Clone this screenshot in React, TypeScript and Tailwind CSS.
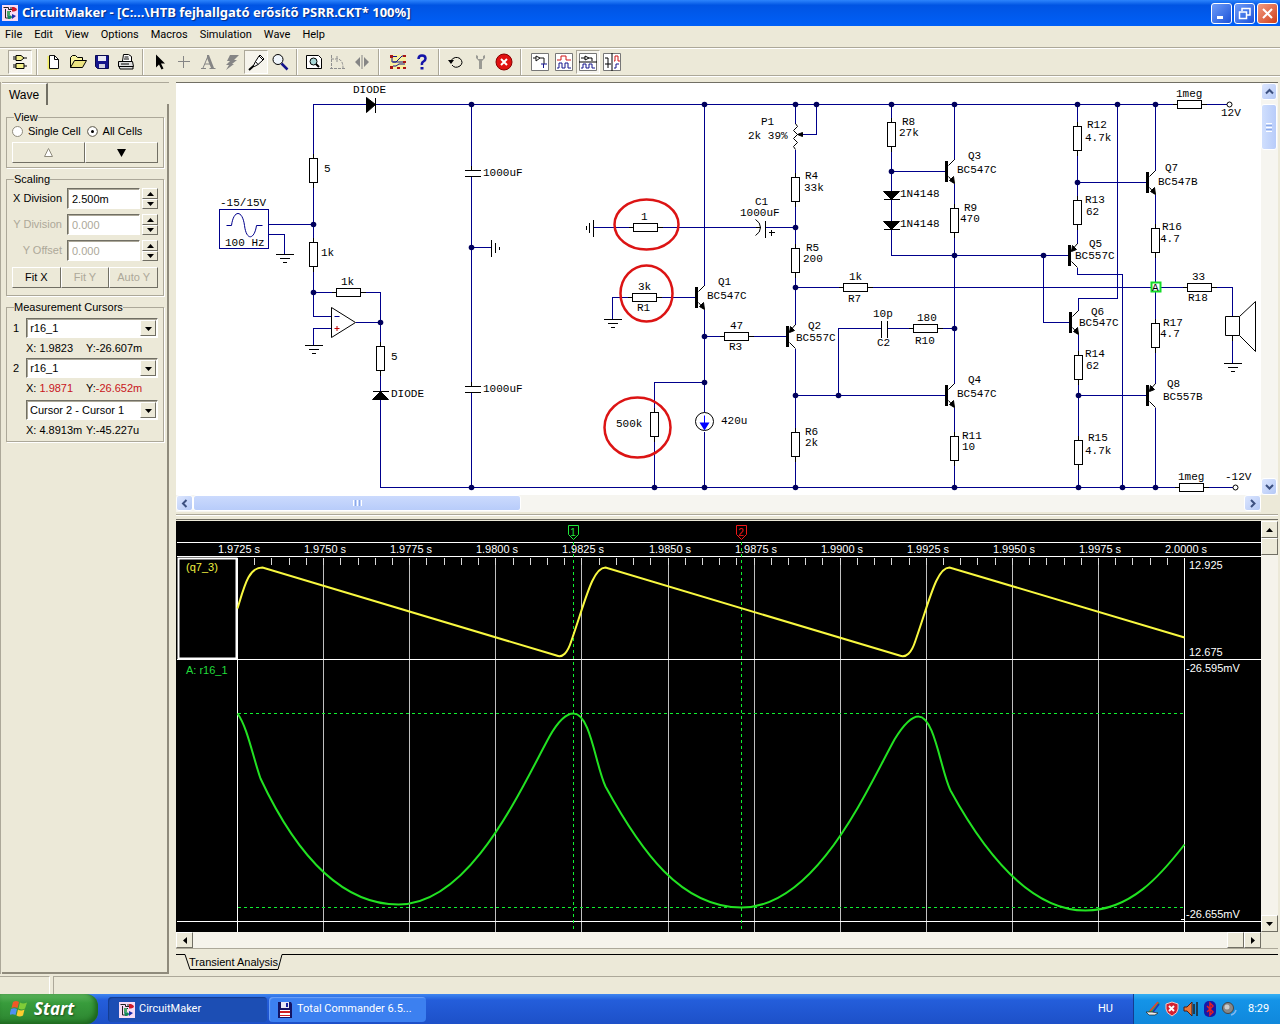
import React from 'react';

const NAVY = '#00008c';

/* ---------- schematic ---------- */

const wires = [
  'M313 158V104H366M375 104H1177M1201 104H1226',
  'M313 182V242M313 266V316H331M313 292H336M360 292H380V346M355 322H380M380 370V391M380 399V487H1179M1203 487H1232',
  'M268 224H313M268 234H284V254M331 328H313V345',
  'M471 104V170M471 176V386M471 392V487M471 247H491',
  'M593 227H633M657 227H755M765 227H795',
  'M704 104V285M704 309V412M704 431V487M656 297H695M632 297H612V319',
  'M704 336H724M748 336H787M704 382H654V412M654 436V487',
  'M795 104V123M795 149V177M795 201V248M795 272V324M795 348V432M795 456V487M816 104V134H802',
  'M795 287H843M867 287H1187M1211 287H1232V316M1232 335V363',
  'M795 395H946M838 395V328H881M887 328H913M937 328H954',
  'M891 104V122M891 146V191M891 199V221M891 229V255H1069M891 171H946',
  'M954 104V159M954 183V208M954 232V383M954 407V436M954 460V487M1043 255V322H1070',
  'M1077 104V126M1077 150V200M1077 224V243M1077 267V274H1122V487M1117 104V298H1078V310',
  'M1078 334V355M1078 379V440M1078 464V487M1078 395H1147M1077 182H1147',
  'M1155 104V170M1155 194V228M1155 252V323M1155 347V383M1155 407V487',
];

const verticalResistors = [
  [313, 158], [313, 242], [380, 346], [795, 177], [795, 248], [891, 122], [954, 208], [1077, 126],
  [1077, 200], [1155, 228], [1155, 323], [1078, 355], [1078, 440], [954, 436], [795, 432], [654, 412],
];

const horizontalResistors = [
  [336, 292], [633, 227], [632, 297], [724, 336], [843, 287], [913, 328], [1177, 104], [1179, 487], [1187, 287],
];

const dots = [
  [471, 104], [704, 104], [795, 104], [816, 104], [891, 104], [954, 104], [1077, 104], [1117, 104], [1155, 104],
  [313, 224], [471, 247], [313, 292], [380, 322], [704, 336], [704, 382], [795, 227], [795, 287], [891, 171],
  [954, 255], [1043, 255], [954, 328], [795, 395], [838, 395], [1077, 182], [1078, 395],
  [471, 487], [654, 487], [704, 487], [795, 487], [954, 487], [1078, 487], [1122, 487], [1155, 487],
];

const labels: [number, number, string][] = [
  [353, 93, 'DIODE'], [324, 172, '5'], [220, 206, '-15/15V'], [225, 246, '100 Hz'], [321, 256, '1k'],
  [341, 285, '1k'], [391, 360, '5'], [391, 397, 'DIODE'], [483, 176, '1000uF'], [483, 392, '1000uF'],
  [761, 125, 'P1'], [748, 139, '2k 39%'], [805, 179, 'R4'], [804, 191, '33k'], [755, 205, 'C1'],
  [740, 216, '1000uF'], [641, 220, '1'], [806, 251, 'R5'], [803, 262, '200'], [718, 285, 'Q1'],
  [707, 299, 'BC547C'], [638, 290, '3k'], [637, 311, 'R1'], [730, 329, '47'], [729, 350, 'R3'],
  [808, 329, 'Q2'], [796, 341, 'BC557C'], [849, 280, '1k'], [848, 302, 'R7'], [873, 317, '10p'],
  [877, 346, 'C2'], [917, 321, '180'], [915, 344, 'R10'], [616, 427, '500k'], [721, 424, '420u'],
  [805, 435, 'R6'], [805, 446, '2k'], [902, 125, 'R8'], [899, 136, '27k'], [900, 197, '1N4148'],
  [900, 227, '1N4148'], [968, 159, 'Q3'], [957, 173, 'BC547C'], [964, 211, 'R9'], [960, 222, '470'],
  [1087, 128, 'R12'], [1085, 141, '4.7k'], [1085, 203, 'R13'], [1086, 215, '62'], [1165, 171, 'Q7'],
  [1158, 185, 'BC547B'], [1162, 230, 'R16'], [1160, 242, '4.7'], [1089, 247, 'Q5'], [1075, 259, 'BC557C'],
  [1192, 280, '33'], [1188, 301, 'R18'], [1176, 97, '1meg'], [1221, 116, '12V'], [1091, 315, 'Q6'],
  [1079, 326, 'BC547C'], [1085, 357, 'R14'], [1086, 369, '62'], [1163, 326, 'R17'], [1160, 337, '4.7'],
  [968, 383, 'Q4'], [957, 397, 'BC547C'], [962, 439, 'R11'], [962, 450, '10'], [1167, 387, 'Q8'],
  [1163, 400, 'BC557B'], [1088, 441, 'R15'], [1085, 454, '4.7k'], [1178, 480, '1meg'], [1225, 480, '-12V'],
];

function Npn({ x, y }: { x: number; y: number }) {
  return (
    <g>
      <rect x={x - 9} y={y - 10} width="2" height="20" fill="#000" />
      <path d={`M${x - 6} ${y - 6}L${x} ${y - 12}M${x - 6} ${y + 5}L${x} ${y + 12}`} />
      <path d={`M${x} ${y + 12}l-1-7l-4 4z`} fill="#000" />
    </g>
  );
}

function Pnp({ x, y }: { x: number; y: number }) {
  return (
    <g>
      <rect x={x - 9} y={y - 10} width="2" height="20" fill="#000" />
      <path d={`M${x - 6} ${y - 5}L${x} ${y - 12}M${x - 6} ${y + 6}L${x} ${y + 12}`} />
      <path d={`M${x - 6} ${y - 4}l1-6l4 4z`} fill="#000" />
    </g>
  );
}

function Schematic() {
  return (
    <svg className="block h-[412px] w-[1085px] shrink-0" viewBox="176 83 1085 412" role="img" aria-label="Headphone amplifier schematic">
      <g transform="translate(0.5 0.5)" fill="none" strokeWidth="1">
        <path d={wires.join('')} stroke={NAVY} shapeRendering="crispEdges" />
        <g stroke="#000" shapeRendering="crispEdges">
          {verticalResistors.map(([x, y]) => (
            <g key={`${x}-${y}`}>
              <path d={`M${x} ${y - 5}v5M${x} ${y + 24}v5`} />
              <rect x={x - 4} y={y} width="8" height="24" fill="#fff" />
            </g>
          ))}
          {horizontalResistors.map(([x, y]) => (
            <g key={`${x}-${y}`}>
              <path d={`M${x - 5} ${y}h5M${x + 24} ${y}h5`} />
              <rect x={x} y={y - 4} width="24" height="8" fill="#fff" />
            </g>
          ))}
          <path d="M464 170h16M464 176h16M464 386h16M464 392h16M471 165v5M471 381v5" />
          <path d="M491 239v17M495 242v10M499 246v3" />
          <path d="M275 254h18M279 258h10M282 262h4M304 345h18M308 349h10M311 353h4M603 319h18M607 323h10M610 327h4M1223 363h18M1227 367h10M1230 371h4" />
          <path d="M593 219v17M589 222v10M586 225v4M765 220v17M881 320v17M887 320v17M755 227h5" />
          <path d="M768 232h6M771 229v6" />
          <path d="M375 97v15M372 391h16M883 199h16M883 229h16M1232 335v5" />
        </g>
        <g stroke="#000">
          <path d="M366 97v15l9-8zM372 399h16l-8-8zM883 191h16l-8 8zM883 221h16l-8 8z" fill="#000" />
          <path d="M795 123l2 3l-4 4l4 4l-4 4l4 4l-4 4l2 3" />
          <path d="M797 134l5-2v4z" fill="#000" />
          <path d="M755 219q5 3 5 8t-5 8" />
          <path d="M331 307V337L355 322z" fill="#fff" />
          <path d="M1225 316h14v19h-14zM1239 316L1255 301V351L1239 335" />
          <circle cx="704" cy="421" r="9" fill="#fff" />
          <circle cx="1229" cy="104" r="2.500" fill="#fff" />
          <circle cx="1235" cy="487" r="2.500" fill="#fff" />
          <Npn x={704} y={297} />
          <Npn x={954} y={171} />
          <Npn x={954} y={395} />
          <Npn x={1155} y={182} />
          <Npn x={1078} y={322} />
          <Pnp x={795} y={336} />
          <Pnp x={1077} y={255} />
          <Pnp x={1155} y={395} />
        </g>
        <path d="M704 415v8" stroke="#00f" />
        <path d="M699 422h10l-5 8z" fill="#00f" />
        <path d="M334 316h5" stroke={NAVY} />
        <path d="M334 328h5M336.500 325.500v5" stroke="#c00000" />
        <rect x="219" y="209" width="49" height="39" stroke={NAVY} />
        <path d="M226 225h5c2-16 11-16 13 0s10 14 12 0h6" stroke={NAVY} />
        <g fill="#00005c">
          {dots.map(([x, y]) => (
            <circle key={`${x}-${y}`} cx={x} cy={y} r="2.800" />
          ))}
        </g>
        <rect x="1151" y="282" width="9" height="9" stroke="#14dc28" strokeWidth="2" fill="#fff" />
        <g stroke="#dc1414" strokeWidth="2.500">
          <ellipse cx="646" cy="224" rx="32" ry="25" />
          <ellipse cx="646" cy="293" rx="26" ry="28" />
          <ellipse cx="637" cy="427" rx="33" ry="30" />
        </g>
      </g>
      <g className="font-['Liberation_Mono',monospace] text-[11px]" fill="#000">
        {labels.map(([x, y, t]) => (
          <text key={`${x}-${y}`} x={x} y={y}>{t}</text>
        ))}
        <text x="1152" y="291">A</text>
      </g>
    </svg>
  );
}

/* ---------- wave plot ---------- */

const gridX = [237, 323, 409, 495, 581, 668, 754, 840, 926, 1012, 1098, 1184];
const times = ['1.9725 s', '1.9750 s', '1.9775 s', '1.9800 s', '1.9825 s', '1.9850 s', '1.9875 s', '1.9900 s', '1.9925 s', '1.9950 s', '1.9975 s', '2.0000 s'];
const minorTicks = Array.from({ length: 55 }, (_, i) => `M${Math.round(237 + i * 17.22)} 557v7`).join('');

function WavePlot() {
  return (
    <svg className="block h-[411px] w-[1085px] shrink-0" viewBox="176 521 1085 411" role="img" aria-label="Transient analysis waveforms">
      <g transform="translate(0.5 0.5)" fill="none">
        <g shapeRendering="crispEdges">
          <path d={gridX.map((x) => `M${x} 557V932`).join('')} stroke="#c0c0c0" />
          <path d={minorTicks} stroke="#d8d8d8" />
          <path d="M176 542H1261M176 556H1261M176 659H1261M176 921H1261M237 557V932M1184 557V932M1180 919h4" stroke="#fff" />
          <path d="M237 713H1184M237 907H1184" stroke="#10f030" strokeDasharray="3 3" />
          <path d="M573 541V932M741 541V932" stroke="#10f030" strokeDasharray="3 3" />
        </g>
        <rect x="178" y="558" width="58" height="100" stroke="#fff" strokeWidth="2" />
        <path d="M568 525h10v9l-5 5l-5-5z" stroke="#21e83b" />
        <path d="M736 525h10v9l-5 5l-5-5z" stroke="#f01818" />
        <path
          d="M237 608C244 585 248 567 262 567L556 655Q565 659 571 640C585 600 592 567 605 567L899 655Q909 659 915 640C929 600 936 567 949 567L1184 637"
          stroke="#f8f840" strokeWidth="2"
        />
        <path
          d="M237 713C247 727 252 755 260 778C290 842 335 904 398 904C470 904 520 789 549 736Q562 713 573 713C590 713 595 765 605 786C640 850 680 907 741 907C815 907 865 792 894 739Q908 716 918 716C934 716 940 769 950 790C985 854 1030 910 1085 910C1130 910 1160 875 1184 844"
          stroke="#22e222" strokeWidth="2"
        />
      </g>
      <g className="font-['Liberation_Sans',sans-serif] text-[11px]" fill="#fff">
        {times.map((t, i) => (
          <text key={t} x={gridX[i] + 2} y="553" textAnchor="middle">{t}</text>
        ))}
        <text x="1189" y="569">12.925</text>
        <text x="1189" y="656">12.675</text>
        <text x="1186" y="672">-26.595mV</text>
        <text x="1186" y="918">-26.655mV</text>
        <text x="186" y="571" fill="#f0f040">(q7_3)</text>
        <text x="186" y="674" fill="#22dc3c">A: r16_1</text>
        <text x="573" y="536" fill="#22e83c" fontSize="10" textAnchor="middle">1</text>
        <text x="741" y="536" fill="#f01818" fontSize="10" textAnchor="middle">2</text>
      </g>
    </svg>
  );
}

/* ---------- small pieces ---------- */

const raised = 'border border-t-white border-l-white border-r-[#716f64] border-b-[#716f64] bg-[#ece9d8]';
const sunken = 'border border-t-[#716f64] border-l-[#716f64] border-r-white border-b-white bg-white';

function Tri({ dir }: { dir: 'up' | 'down' | 'left' | 'right' }) {
  const d = { up: 'M0 5h7L3.500 1z', down: 'M0 1h7L3.500 5z', left: 'M5 0v7L1 3.500z', right: 'M1 0v7L5 3.500z' }[dir];
  return <svg className="h-[7px] w-[7px]" viewBox={dir === 'up' || dir === 'down' ? '0 -1 7 7' : '-1 0 7 7'}><path d={d} /></svg>;
}

function AppIcon() {
  return (
    <svg className="h-4 w-4 shrink-0" viewBox="0 0 16 16">
      <rect width="16" height="16" fill="#f8dcf4" />
      <path d="M1.500 2.500h5v2h4M3.500 4v9h4M6 6.500h3M9 2v3" fill="none" stroke="#222" />
      <path d="M10 2h2q3 1 3 2.500t-3 2h-2z" fill="#d01828" />
      <path d="M5 6h3v4H5z" fill="#48a868" />
      <path d="M10 9l4 2l-4 3z" fill="#1c2cac" />
      <path d="M5 10q5 0 5 2t-4 2z" fill="#128858" />
    </svg>
  );
}

function CaptionButton({ label, red, children }: { label: string; red?: boolean; children: React.ReactNode }) {
  return (
    <button aria-label={label} className={`flex h-[21px] w-[21px] items-center justify-center rounded-[3px] border border-white ${red ? 'bg-linear-to-br from-[#f09a80] to-[#d03c10]' : 'bg-linear-to-br from-[#6f9cf8] to-[#1c50d8]'}`}>
      <svg className="h-[15px] w-[15px]" viewBox="0 0 15 15" fill="none" stroke="#fff" strokeWidth="2">{children}</svg>
    </button>
  );
}

function Tool({ label, pressed, children }: { label: string; pressed?: boolean; children: React.ReactNode }) {
  return (
    <button aria-label={label} className={`flex h-6 w-6 items-center justify-center ${pressed ? 'border border-t-[#aca899] border-l-[#aca899] border-r-white border-b-white bg-[#f6f4ec]' : ''}`}>
      <svg className="h-[18px] w-[18px] shrink-0" viewBox="0 0 18 18" fill="none" stroke="#000">{children}</svg>
    </button>
  );
}

function Sep({ wide }: { wide?: boolean }) {
  return <div className={`h-[26px] w-0.5 border-l border-[#aca899] bg-white ${wide ? 'mr-1.5 ml-1' : 'mx-1'}`} />;
}

function Toolbar() {
  return (
    <div className="flex h-[29px] items-center border-t border-b border-t-[#aca899] border-b-[#aca899] pl-2 shadow-[inset_0_1px_0_#fff,0_1px_0_#fff]">
      <Tool label="Parts" pressed>
        <path d="M5 2.500h5l3 2.500l-3 2.500H5zM2 4h3M2 6h3M13 5h3M5 10.500h8v5H5zM2 12h3M2 14h3M13 13h3" fill="#f4f08c" />
      </Tool>
      <Sep />
      <Tool label="New"><path d="M4 3v12h9" stroke="#f4f060" strokeWidth="3" /><path d="M4.500 2.500h5l4 4v9h-9z" fill="#fff" stroke="#111" /><path d="M9.500 2.500v4h4" /></Tool>
      <Tool label="Open"><path d="M1.500 14.500v-10l2-2h3l2 2h5v3" fill="#f8f4a0" /><path d="M1.500 14.500l4-7h12l-4 7z" fill="#ece480" /></Tool>
      <Tool label="Save"><path d="M2.500 2.500h13v13h-11l-2-2z" fill="#14148c" stroke="#0a0a50" /><path d="M5 3h8v5H5z" fill="#e8e8f4" stroke="none" /><path d="M6 11h6v4H6z" fill="#d0d0e0" stroke="none" /></Tool>
      <Tool label="Print"><path d="M5.500 8l1-6.500h5l3 2V8M7.500 4h4M7 6h5" fill="#fff" /><path d="M1.500 8.500h14l1 5h-15zM2 13.500h14v2.500H3z" fill="#ddd" /><path d="M4 11h8" /></Tool>
      <Sep />
      <Tool label="Select"><path d="M5 1.500v13l3-3l2.500 5l2-1l-2.500-5h4z" fill="#000" stroke="none" /></Tool>
      <Tool label="Wire"><path d="M8.500 3v12M3 8.500h12" stroke="#858585" /></Tool>
      <Tool label="Text"><path d="M2 15.500h5M10.500 15.500h6M4 15L9 3M6 11h6" stroke="#858585" /><path d="M8 2h2l5 13h-3L8 5z" fill="#858585" stroke="none" /></Tool>
      <Tool label="Delete"><path d="M7 2h9l-5 5h3l-5 4h2l-8 6l3-5H3l4-4H4z" fill="#858585" stroke="none" /></Tool>
      <Tool label="Probe" pressed><path d="M8.500 8.500L12 3l4 4l-5 4.500zM8.500 8.500l-2 4l1 1l3.500-2M12 3l1-1l4 4l-1 1" fill="#fff" /><path d="M7 12.500l-5 4.500" strokeWidth="2" /></Tool>
      <Tool label="Zoom"><circle cx="7" cy="6.500" r="5" fill="#f0f6fc" /><path d="M10.500 10.500l6 6" stroke="#14148c" strokeWidth="2.500" /></Tool>
      <Sep />
      <Tool label="Fit circuit"><path d="M1.500 2.500h12l3 3v10h-15z" fill="#fff" /><circle cx="8.500" cy="8.500" r="3.500" fill="#a8d8d8" /><path d="M11 11l3 3" strokeWidth="2" /></Tool>
      <Tool label="Rotate"><path d="M2.500 2v14M1 15.500h16M2 6h7q5 1 5 9M8 3v6" stroke="#909090" strokeDasharray="3 1" /></Tool>
      <Tool label="Mirror"><path d="M2 9l5-5v10zM16 9l-5-5v10z" fill="#858585" stroke="none" /><path d="M9 2v14" stroke="#858585" /></Tool>
      <Sep wide />
      <Tool label="Trace">
        <path d="M1 2h16v14H1z" fill="#f8f0a0" stroke="none" />
        <path d="M4 3.500h4M3 5v4h4l6-6h3M4 9h11M4 13h3l3-2h6" stroke="#14148c" />
        <path d="M1 2h3v3H1zM14 2h3v2h-3zM14 8h3v2h-3zM1 13h3v3H1zM8 14h3v2H8zM14 14h3v2h-3z" fill="#a81414" stroke="none" />
      </Tool>
      <Tool label="Help"><path d="M5.500 6q0-3.500 3.500-3.500t3.500 3q0 2-2 3T9 12" stroke="#1414a8" strokeWidth="2.500" /><path d="M7.500 14h3v2.500h-3z" fill="#1414a8" stroke="none" /></Tool>
      <Sep />
      <Tool label="Reset"><path d="M4 7.500q4-5 9-2q4 4 0 7.500q-5 3-8-1" /><path d="M1 7h6l-3 4z" fill="#000" stroke="none" /></Tool>
      <Tool label="Step"><path d="M5 2v3l3 3v8h3V8l3-3V2l-2 1v3H7V3z" fill="#9a9a94" stroke="none" /></Tool>
      <Tool label="Stop"><circle cx="9" cy="9" r="8" fill="#e01010" stroke="#800" /><path d="M6 6l6 6M12 6l-6 6" stroke="#fff" strokeWidth="2" /></Tool>
      <Sep wide />
      <Tool label="Schematic view"><path d="M.5 .5h17v17H.5z" fill="#fff" stroke="#777" /><path d="M2 5h3M9 5h4v6M5 3v5l4-3z" stroke="#111" /><path d="M10 11h6M12.500 11v4" stroke="#14148c" /></Tool>
      <Tool label="Wave view"><path d="M.5 .5h17v17H.5z" fill="#fff" stroke="#777" /><path d="M2 7h4V3h5v4h5" stroke="#d01414" /><path d="M2 15h2v-5h3v5h3v-5h3v5h3" stroke="#14148c" /></Tool>
      <Tool label="Split horizontally" pressed><path d="M.5 .5h17v17H.5z" fill="#fff" stroke="#777" /><path d="M0 9h18M2 5h4M10 5h3v3M6 3v4l4-2z" /><path d="M2 15h2v-4h3v4h3v-4h3v4h3" stroke="#14148c" /></Tool>
      <Tool label="Split vertically"><path d="M.5 .5h17v17H.5z" fill="#fff" stroke="#777" /><path d="M9 0v18M2 5h3v6M2 11h6M5 11v4" /><path d="M11 8h1V3h3v5h2" stroke="#d01414" /><path d="M11 15h2v-4h3" stroke="#14148c" /></Tool>
    </div>
  );
}

function Group({ title, className, children }: { title: string; className: string; children: React.ReactNode }) {
  return (
    <fieldset className={`min-w-0 border border-[#aca899] px-[5px] shadow-[1px_1px_0_#fff] ${className}`}>
      <legend className="ml-0.5 px-0 leading-3">{title}</legend>
      {children}
    </fieldset>
  );
}

function ScaleRow({ label, value, disabled }: { label: string; value: string; disabled?: boolean }) {
  const id = label.replace(' ', '-').toLowerCase();
  return (
    <div className="flex h-[21px] items-center">
      <label htmlFor={id} className={`w-[50px] text-right whitespace-nowrap ${disabled ? 'text-[#aca899]' : ''}`}>{label}</label>
      <input id={id} defaultValue={value} disabled={disabled} className={`ml-[5px] h-[21px] w-0 min-w-0 grow px-1 shadow-[inset_1px_1px_0_#aca899] ${sunken} ${disabled ? 'text-[#aca899]' : ''}`} />
      <div className="ml-0.5 flex h-[21px] w-4 flex-col">
        <button aria-label={`Increase ${label}`} className={`flex flex-1 items-center justify-center ${raised}`}><Tri dir="up" /></button>
        <button aria-label={`Decrease ${label}`} className={`flex flex-1 items-center justify-center ${raised}`}><Tri dir="down" /></button>
      </div>
    </div>
  );
}

function Picker({ label, value }: { label: string; value: string }) {
  return (
    <div className="relative min-w-0 grow">
      <select aria-label={label} defaultValue={value} className={`block h-5 w-full appearance-none px-[3px] shadow-[inset_1px_1px_0_#aca899] ${sunken}`}>
        <option>{value}</option>
      </select>
      <span className={`pointer-events-none absolute top-0.5 right-0.5 flex h-4 w-4 items-center justify-center ${raised}`}><Tri dir="down" /></span>
    </div>
  );
}

function SidePanel() {
  const small = `h-[21px] flex-1 ${raised}`;
  return (
    <aside className="flex w-[169px] shrink-0 flex-col border-l border-l-[#aca899] pl-px">
      <div className="h-[22px] border-t border-[#aca899]">
        <button aria-pressed="true" className="h-[22px] w-[46px] border-t border-r-2 border-t-white border-r-[#716f64] text-center text-xs">Wave</button>
      </div>
      <div className="flex grow flex-col gap-[5px] border-r-2 border-b-2 border-[#8f8b7c] px-1 pt-[7px] pr-[3px]">
        <Group title="View" className="h-[57px]">
          <div className="mt-0.5 flex h-3 items-center gap-1.5 whitespace-nowrap">
            <label className="flex items-center gap-[5px]"><input type="radio" name="cells" className="h-[11px] w-[11px] appearance-none rounded-full border border-[#8f8b7c] bg-white" />Single Cell</label>
            <label className="flex items-center gap-[5px]"><input type="radio" name="cells" defaultChecked className="h-[11px] w-[11px] appearance-none rounded-full border border-[#8f8b7c] bg-black shadow-[inset_0_0_0_3px_#fff]" />All Cells</label>
          </div>
          <div className="mt-[5px] flex">
            <button aria-label="Previous cell" disabled className={`flex items-center justify-center text-[#aca899] ${small}`}>
              <svg className="h-[9px] w-[9px]" viewBox="0 0 9 9"><path d="M.5 8.500h8L4.500.5z" fill="#fff" stroke="#8f8b7c" /></svg>
            </button>
            <button aria-label="Next cell" className={`flex items-center justify-center ${small}`}>
              <svg className="h-2 w-[9px]" viewBox="0 0 9 8"><path d="M0 0h9L4.500 8z" /></svg>
            </button>
          </div>
        </Group>
        <Group title="Scaling" className="h-[123px]">
          <div className="mt-[3px] flex flex-col gap-[5px]">
            <ScaleRow label="X Division" value="2.500m" />
            <ScaleRow label="Y Division" value="0.000" disabled />
            <ScaleRow label="Y Offset" value="0.000" disabled />
          </div>
          <div className="mt-1.5 flex">
            <button className={small}>Fit X</button>
            <button disabled className={`text-[#aca899] ${small}`}>Fit Y</button>
            <button disabled className={`text-[#aca899] ${small}`}>Auto Y</button>
          </div>
        </Group>
        <Group title="Measurement Cursors" className="h-[141px]">
          <div className="mt-[5px] flex items-center gap-[7px]"><span className="ml-px">1</span><Picker label="Cursor 1" value="r16_1" /></div>
          <p className="mt-1 flex h-3 items-center pl-3.5 leading-3 whitespace-nowrap"><span className="w-[60px]">X: 1.9823</span><span>Y:-26.607m</span></p>
          <div className="mt-1 flex items-center gap-[7px]"><span className="ml-px">2</span><Picker label="Cursor 2" value="r16_1" /></div>
          <p className="mt-1 flex h-3 items-center pl-3.5 leading-3 whitespace-nowrap"><span className="w-[60px]">X: <span className="text-[#c81420]">1.9871</span></span><span>Y:<span className="text-[#c81420]">-26.652m</span></span></p>
          <div className="mt-1.5 flex pl-3.5"><Picker label="Difference" value="Cursor 2 - Cursor 1" /></div>
          <p className="mt-1 flex h-3 items-center pl-3.5 leading-3 whitespace-nowrap"><span className="w-[60px]">X: 4.8913m</span><span>Y:-45.227u</span></p>
        </Group>
      </div>
    </aside>
  );
}

const xpButton = 'flex shrink-0 items-center justify-center rounded-[3px] border border-white bg-linear-to-br from-[#dce6fe] to-[#b4c8f6]';
const trough = 'bg-[#f5f3eb]';

function Chevron({ d, label, className }: { d: string; label: string; className: string }) {
  return (
    <button aria-label={label} className={`${xpButton} ${className}`}>
      <svg className="h-[9px] w-[9px]" viewBox="0 0 9 9" fill="none" stroke="#3c5080" strokeWidth="2"><path d={d} /></svg>
    </button>
  );
}

function Workspace() {
  return (
    <main className="mr-0.5 ml-[7px] flex min-w-0 grow flex-col border-t border-t-[#716f64]">
      <section className="flex bg-white" aria-label="Schematic">
        <div className="flex min-w-0 grow overflow-hidden"><Schematic /></div>
        <div className="flex w-[17px] shrink-0 flex-col bg-[#f6f5f0]">
          <Chevron label="Scroll up" d="M1 6.500l3.500-3.500l3.500 3.500" className="h-[17px] w-4" />
          <div className="mt-1 flex h-[46px] w-4 flex-col items-center justify-center gap-px rounded-[3px] border border-white bg-linear-to-r from-[#d0dffd] to-[#b8ccfa]">
            <i className="h-px w-1.5 bg-white" /><i className="h-px w-1.5 bg-[#8caae8]" /><i className="h-px w-1.5 bg-white" /><i className="h-px w-1.5 bg-[#8caae8]" /><i className="h-px w-1.5 bg-white" />
          </div>
          <Chevron label="Scroll down" d="M1 3l3.500 3.500l3.500-3.500" className="mt-auto h-[17px] w-4" />
        </div>
      </section>
      <div className="flex h-[17px] bg-[#f6f5f0]">
        <Chevron label="Scroll left" d="M6.500 1l-3.500 3.500l3.500 3.500" className="h-4 w-[17px]" />
        <div className="flex h-4 w-[328px] items-center justify-center gap-px rounded-[3px] border border-white bg-linear-to-b from-[#cbdafd] to-[#b8ccfa]">
          <i className="h-1.5 w-px bg-white" /><i className="h-1.5 w-px bg-[#8caae8]" /><i className="h-1.5 w-px bg-white" /><i className="h-1.5 w-px bg-[#8caae8]" /><i className="h-1.5 w-px bg-white" />
        </div>
        <Chevron label="Scroll right" d="M3 1l3.500 3.500l-3.500 3.500" className="ml-auto h-4 w-[17px]" />
        <div className="w-[17px] bg-[#ece9d8]" />
      </div>
      <div className="mt-0.5 mb-px h-[6px] border-t border-b border-t-[#aca899] border-b-[#716f64] shadow-[inset_0_1px_0_#fff]" />
      <section className="flex grow" aria-label="Waveforms">
        <div className="flex min-w-0 grow overflow-hidden bg-black"><WavePlot /></div>
        <div className={`flex w-[17px] shrink-0 flex-col ${trough}`}>
          <button aria-label="Plot up" className={`flex h-[17px] items-center justify-center ${raised}`}><Tri dir="up" /></button>
          <div className={`h-[17px] ${raised}`} />
          <button aria-label="Plot down" className={`mt-auto flex h-[17px] items-center justify-center ${raised}`}><Tri dir="down" /></button>
        </div>
      </section>
      <div className={`flex h-[17px] border-b border-[#aca899] ${trough}`}>
        <button aria-label="Plot left" className={`flex w-[17px] items-center justify-center ${raised}`}><Tri dir="left" /></button>
        <div className={`ml-auto w-[17px] ${raised}`} />
        <button aria-label="Plot right" className={`flex w-[17px] items-center justify-center ${raised}`}><Tri dir="right" /></button>
        <div className="w-[17px] bg-[#ece9d8]" />
      </div>
      <div className="flex h-[25px] pt-[5px]">
        <div className="h-px w-2 bg-black" />
        <button aria-label="Transient Analysis" className="relative h-4 w-[99px] whitespace-nowrap">
          <svg className="absolute inset-0 h-4 w-[99px]" viewBox="0 0 99 16" fill="none" stroke="#000"><path d="M0 .5h1l5 15h88l4-15h1" /></svg>
          <span className="relative block leading-4">Transient Analysis</span>
        </button>
        <div className="h-px grow bg-black" />
      </div>
    </main>
  );
}

function Taskbar() {
  return (
    <footer className="flex h-[30px] items-stretch bg-linear-to-b from-[#3f86f0] via-[#245edb] via-20% to-[#1d50c8] font-[Roboto,sans-serif] text-[11px] text-white">
      <button className="flex w-[98px] items-center gap-1.5 rounded-r-xl bg-linear-to-b from-[#5cb45c] via-[#389c3c] via-30% to-[#2c8430] pl-2.5 shadow-[inset_-3px_-2px_5px_#1c641c]">
        <svg className="h-[18px] w-[18px]" viewBox="0 0 18 18">
          <path d="M3 2q3-2 6 0l-1.500 6q-3-1.500-6 0z" fill="#f05828" /><path d="M10 2.500q3 2 7 0l-2 6q-3 2-6.500 0z" fill="#80cc38" />
          <path d="M1 9q3-1.500 6 0l-1.500 6q-3-1.500-6 0z" fill="#5090f0" /><path d="M8 9.500q3 2 6.500 0l-1.500 6q-3.500 2-6.500 0z" fill="#fccc30" />
        </svg>
        <span className="font-['Open_Sans',sans-serif] text-[17px] font-bold italic [text-shadow:1px_1px_2px_#1c501c]">Start</span>
      </button>
      <button className="mt-[3px] ml-2.5 flex h-[25px] w-[159px] items-center gap-1 rounded-sm bg-[#1c4eb4] pl-[11px] shadow-[inset_1px_1px_1px_#143c90]"><AppIcon />CircuitMaker</button>
      <button className="mt-[3px] ml-0.5 flex h-[25px] w-[157px] items-center gap-1 rounded-sm bg-[#3c80f0] pl-2 shadow-[inset_1px_1px_1px_#6ca0f8]">
        <svg className="h-4 w-4" viewBox="0 0 16 16"><path d="M1 0h13l1 2v14H1z" fill="#141464" /><path d="M4 0h8v6H4z" fill="#e8e8f4" /><path d="M9 1h2v4H9z" fill="#1420a0" /><path d="M3 8h10v7H3z" fill="#fff" /><path d="M3 9h10v2H3zM3 13h10v1H3z" fill="#d02020" /></svg>
        Total Commander 6.5...
      </button>
      <span className="mr-5 ml-auto self-center">HU</span>
      <div className="flex w-[147px] items-center gap-[3px] border-l border-[#143c90] bg-linear-to-b from-[#34b0f4] via-[#1494e8] via-20% to-[#1088dc] pl-[11px]">
        <svg className="h-4 w-4" viewBox="0 0 16 16"><path d="M3 11l10-10l2 1l-7 9z" fill="#30a050" /><path d="M5 10L13 1" stroke="#e84030" strokeWidth="1.500" /><path d="M8 11l6-8" stroke="#2030c0" strokeWidth="1.500" /><path d="M1 11h6l6 1l-3 2H4z" fill="#eee" stroke="#222" strokeWidth=".7" /></svg>
        <svg className="h-4 w-4" viewBox="0 0 16 16"><path d="M8 1l6 2v5q0 4-6 7q-6-3-6-7V3z" fill="#d42030" stroke="#f0c8c8" /><path d="M5 5l5 5M10 5l-5 5" stroke="#fff" strokeWidth="2" /></svg>
        <svg className="h-4 w-4" viewBox="0 0 16 16"><path d="M1 6h3l5-5v14l-5-5H1z" fill="#e87838" stroke="#501c10" /><path d="M11 3v10M14 1v14" stroke="#222" strokeWidth="1.500" /></svg>
        <svg className="h-4 w-4" viewBox="0 0 16 16"><rect x="2" y="0" width="12" height="16" rx="5" fill="#1818a8" /><path d="M5 5l6 6l-3 3V2l3 3l-6 6" stroke="#e82020" strokeWidth="1.500" fill="none" /></svg>
        <svg className="h-4 w-4" viewBox="0 0 16 16"><circle cx="7" cy="7" r="5.500" fill="#888" stroke="#444" /><circle cx="6" cy="6" r="2.500" fill="#ccc" /><path d="M10 14q4-1 5-5" stroke="#80b8f0" strokeWidth="1.500" fill="none" /></svg>
        <time className="ml-2">8:29</time>
      </div>
    </footer>
  );
}

export default function App() {
  return (
    <div className="flex min-h-screen flex-col overflow-hidden bg-[#ece9d8] font-['Liberation_Sans',sans-serif] text-[11px] text-black">
      <header className="flex h-[26px] items-center bg-linear-to-b from-[#2c84fc] via-[#0054e3] via-20% to-[#0060f8] px-0.5">
        <AppIcon />
        <h1 className="ml-1 font-['Noto_Sans',sans-serif] text-[13px] font-bold whitespace-nowrap text-white [text-shadow:1px_1px_1px_#0a2c80]">CircuitMaker - [C:...\HTB fejhallgató erősítő PSRR.CKT* 100%]</h1>
        <div className="ml-auto flex gap-0.5">
          <CaptionButton label="Minimize"><path d="M3 11.500h6" strokeWidth="3" /></CaptionButton>
          <CaptionButton label="Restore"><path d="M5 5V2.500h8V9h-3M2.500 6h7v6.500h-7z" strokeWidth="1.500" /></CaptionButton>
          <CaptionButton label="Close" red><path d="M3 3l9 9M12 3l-9 9" /></CaptionButton>
        </div>
      </header>
      <nav className="flex h-[21px] items-start gap-3 pt-0.5 pl-[5px] font-[Roboto,sans-serif] leading-[14px]">
        {['File', 'Edit', 'View', 'Options', 'Macros', 'Simulation', 'Wave', 'Help'].map((m) => (
          <button key={m}>{m}</button>
        ))}
      </nav>
      <Toolbar />
      <div className="mt-1.5 flex grow">
        <SidePanel />
        <Workspace />
      </div>
      <div className="mt-0.5 flex h-[18px] gap-[3px]">
        <div className="w-[50px] border-t border-r border-t-[#aca899] border-r-white" />
        <div className="grow border-t border-l border-[#aca899]" />
      </div>
      <Taskbar />
    </div>
  );
}
